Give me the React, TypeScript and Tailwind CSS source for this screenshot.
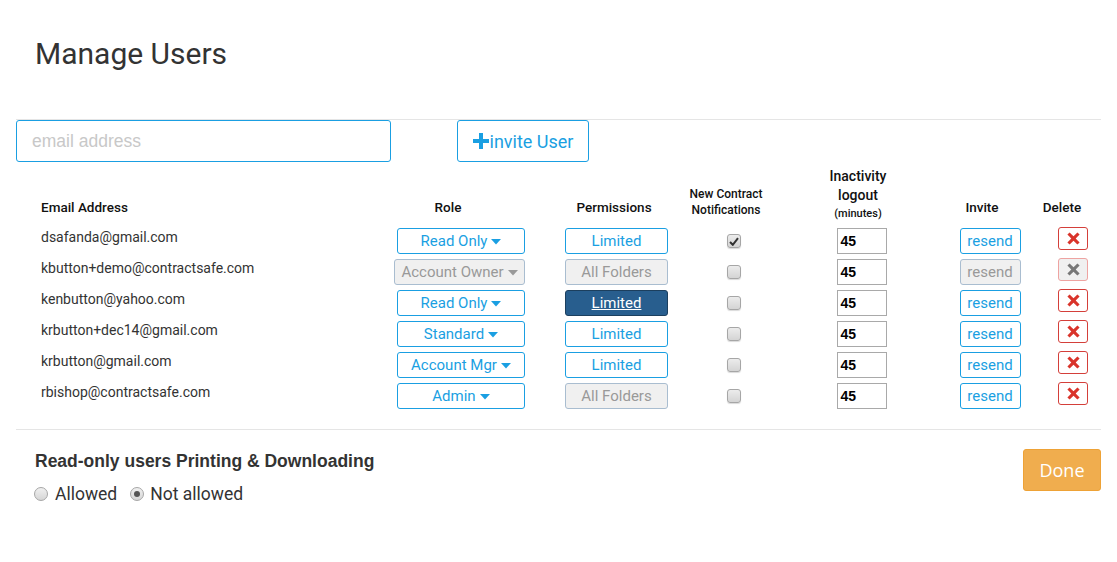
import React from "react";

const BLUE = "#1a9fe2";

type Row = {
  email: string;
  role: string;
  roleDisabled?: boolean;
  perm: string;
  permKind: "normal" | "disabled" | "active";
  checked?: boolean;
  resendDisabled?: boolean;
  delDisabled?: boolean;
};

const rows: Row[] = [
  { email: "dsafanda@gmail.com", role: "Read Only", perm: "Limited", permKind: "normal", checked: true },
  { email: "kbutton+demo@contractsafe.com", role: "Account Owner", roleDisabled: true, perm: "All Folders", permKind: "disabled", resendDisabled: true, delDisabled: true },
  { email: "kenbutton@yahoo.com", role: "Read Only", perm: "Limited", permKind: "active" },
  { email: "krbutton+dec14@gmail.com", role: "Standard", perm: "Limited", permKind: "normal" },
  { email: "krbutton@gmail.com", role: "Account Mgr", perm: "Limited", permKind: "normal" },
  { email: "rbishop@contractsafe.com", role: "Admin", perm: "All Folders", permKind: "disabled" },
];

function Caret({ color }: { color: string }) {
  return (
    <svg width="10" height="6" viewBox="0 0 10 6" className="ml-[4px] mt-[2px]">
      <path d="M0 0 L10 0 L5 5.5 Z" fill={color} />
    </svg>
  );
}

function XIcon({ color }: { color: string }) {
  return (
    <svg width="13" height="13" viewBox="0 0 13 13">
      <path
        d="M2.6 0.4 L6.5 4.3 L10.4 0.4 L12.6 2.6 L8.7 6.5 L12.6 10.4 L10.4 12.6 L6.5 8.7 L2.6 12.6 L0.4 10.4 L4.3 6.5 L0.4 2.6 Z"
        fill={color}
      />
    </svg>
  );
}

function Checkbox({ checked }: { checked?: boolean }) {
  return (
    <div className="w-[14px] h-[14px] rounded-[3px] border border-[#a6a6a6] bg-gradient-to-b from-[#ececec] to-[#d4d4d4] shadow-[0_1px_1px_rgba(0,0,0,0.15)] flex items-center justify-center">
      {checked && (
        <svg width="10" height="9" viewBox="0 0 10 9">
          <path d="M1 5 L3.8 7.8 L9 1.2" stroke="#333" strokeWidth="2" fill="none" />
        </svg>
      )}
    </div>
  );
}

function Radio({ checked }: { checked?: boolean }) {
  return (
    <div className="w-[14px] h-[14px] rounded-full border border-[#a6a6a6] bg-gradient-to-b from-[#f0f0f0] to-[#d6d6d6] flex items-center justify-center">
      {checked && <div className="w-[6px] h-[6px] rounded-full bg-[#555]" />}
    </div>
  );
}

export default function App() {
  return (
    <div className="w-[1117px] h-[562px] bg-white px-4 font-['Roboto',sans-serif] text-[#333] overflow-hidden">
      <h1 className="pt-[36px] pl-[19px] text-[30px] leading-[36px] font-normal text-[#333]">Manage Users</h1>

      <div className="mt-[47px] border-t border-[#e5e5e5] flex">
        <div className="w-[375px] h-[42px] border border-[#1a9fe2] rounded-[3px] flex items-center pl-[15px] text-[17.5px] text-[#c8c8c8] font-['Liberation_Sans',sans-serif]">
          email address
        </div>
        <div className="ml-[66px] w-[132px] h-[42px] border border-[#1a9fe2] rounded-[3px] flex items-center justify-center text-[18px] text-[#1a9fe2]">
          <svg width="16" height="16" viewBox="0 0 16 16" className="mr-[1px]">
            <path d="M6 0 H10 V6 H16 V10 H10 V16 H6 V10 H0 V6 H6 Z" fill={BLUE} />
          </svg>
          invite User
        </div>
      </div>

      <div className="mt-[5px] flex items-end text-[13.5px] font-medium text-[#111]">
        <div className="w-[349px] pl-[25px] leading-[20px] pb-[6px]">Email Address</div>
        <div className="w-[166px] flex justify-center leading-[20px] pb-[6px]">Role</div>
        <div className="w-[166px] flex justify-center leading-[20px] pb-[6px]">Permissions</div>
        <div className="w-[58px] flex justify-center pb-[5px]">
          <div className="text-[12px] leading-[16px] text-center whitespace-nowrap">
            New Contract
            <br />
            Notifications
          </div>
        </div>
        <div className="w-[206px] flex justify-center">
          <div className="text-center whitespace-nowrap">
            <div className="text-[14px] leading-[19px]">Inactivity</div>
            <div className="text-[14px] leading-[19px]">logout</div>
            <div className="text-[11px] leading-[18px]">(minutes)</div>
          </div>
        </div>
        <div className="w-[42px] flex justify-center leading-[20px] pb-[6px]">Invite</div>
        <div className="w-[98px] flex justify-center pl-[20px] leading-[20px] pb-[6px]">Delete</div>
      </div>

      <div className="mt-[5px]">
        {rows.map((r, i) => (
          <div key={i} className="flex h-[31px] items-start">
            <div className="w-[375px] pl-[25px] text-[14px] leading-[20px] -mt-[1px] text-[#333]">{r.email}</div>
            <div className="w-[140px] flex justify-end pr-[6px]">
              {r.roleDisabled ? (
                <div className="w-[131px] h-[26px] border border-[#a9bdd0] bg-[#f0f0f0] rounded-[3px] flex items-center justify-center text-[15px] text-[#999]">
                  {r.role}
                  <Caret color="#999" />
                </div>
              ) : (
                <div className="w-[128px] h-[26px] border border-[#1a9fe2] rounded-[3px] flex items-center justify-center text-[15px] text-[#1a9fe2]">
                  {r.role}
                  <Caret color={BLUE} />
                </div>
              )}
            </div>
            <div className="w-[171px] flex justify-center">
              {r.permKind === "normal" && (
                <div className="w-[103px] h-[26px] border border-[#1a9fe2] rounded-[3px] flex items-center justify-center text-[15px] text-[#1a9fe2]">
                  {r.perm}
                </div>
              )}
              {r.permKind === "disabled" && (
                <div className="w-[103px] h-[26px] border border-[#a9bdd0] bg-[#f0f0f0] rounded-[3px] flex items-center justify-center text-[15px] text-[#999]">
                  {r.perm}
                </div>
              )}
              {r.permKind === "active" && (
                <div className="w-[103px] h-[26px] border border-[#1c3f5e] bg-[#285e8e] rounded-[3px] flex items-center justify-center text-[15px] text-white underline">
                  {r.perm}
                </div>
              )}
            </div>
            <div className="w-[64px] flex justify-center pt-[6px]">
              <Checkbox checked={r.checked} />
            </div>
            <div className="w-[191px] flex justify-center">
              <div className="w-[50px] h-[26px] border border-[#a9a9a9] flex items-center pl-[3px] text-[14px] font-bold text-black font-['Liberation_Sans',sans-serif]">
                45
              </div>
            </div>
            <div className="w-[66px] flex justify-center">
              {r.resendDisabled ? (
                <div className="w-[61px] h-[26px] border border-[#a9bdd0] bg-[#f0f0f0] rounded-[3px] flex items-center justify-center text-[15px] text-[#999]">
                  resend
                </div>
              ) : (
                <div className="w-[61px] h-[26px] border border-[#1a9fe2] rounded-[3px] flex items-center justify-center text-[15px] text-[#1a9fe2]">
                  resend
                </div>
              )}
            </div>
            <div className="w-[78px] flex justify-start pl-[35px] -mt-[1px]">
              {r.delDisabled ? (
                <div className="w-[30px] h-[23px] border border-[#eea3a1] bg-[#f0f0f0] rounded-[3px] flex items-center justify-center">
                  <XIcon color="#777" />
                </div>
              ) : (
                <div className="w-[30px] h-[23px] border border-[#d43f3a] rounded-[3px] flex items-center justify-center">
                  <XIcon color="#d9342b" />
                </div>
              )}
            </div>
          </div>
        ))}
      </div>

      <div className="mt-[15px] border-t border-[#e5e5e5] flex justify-between pt-[19px]">
        <div className="pl-[19px]">
          <div className="text-[17.5px] leading-[24px] font-bold font-['Liberation_Sans',sans-serif] text-[#333]">
            Read-only users Printing &amp; Downloading
          </div>
          <div className="mt-[9px] flex items-center text-[17.5px] leading-[24px] text-[#333] -ml-[1px]">
            <Radio />
            <span className="ml-[7px]">Allowed</span>
            <div className="ml-[13px]">
              <Radio checked />
            </div>
            <span className="ml-[6px]">Not allowed</span>
          </div>
        </div>
        <div className="w-[78px] h-[42px] bg-[#f0ad4e] border border-[#eea236] rounded-[3px] flex items-center justify-center text-[18px] text-white font-['Open_Sans',sans-serif]">
          Done
        </div>
      </div>
    </div>
  );
}
